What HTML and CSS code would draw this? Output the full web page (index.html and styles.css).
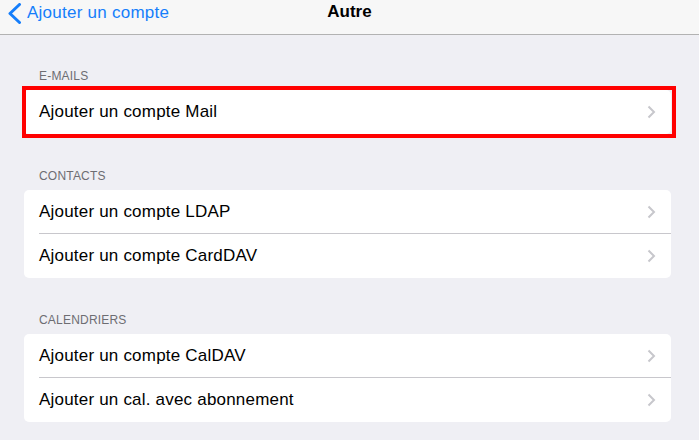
FILE: index.html
```html
<!DOCTYPE html>
<html lang="fr">
<head>
<meta charset="utf-8">
<title>Autre</title>
<link rel="stylesheet" href="styles.css">
</head>
<body>
<header class="navbar">
  <a class="back" href="#">
    <svg class="back-icon" width="14" height="21" viewBox="0 0 14 21"><path d="M11.5 1.5 L2 10.5 L11.5 19.5" fill="none" stroke="#157efb" stroke-width="3" stroke-linecap="round" stroke-linejoin="round"/></svg>
    <span>Ajouter un compte</span>
  </a>
  <h1 class="title">Autre</h1>
  <div class="spacer"></div>
</header>
<main class="content">
  <section class="group">
    <h2 class="group-title">E-mails</h2>
    <ul class="card card--marked">
      <li class="row"><span>Ajouter un compte Mail</span><svg class="chev" width="9" height="14" viewBox="0 0 9 14"><path d="M1.5 1.5 L7 7 L1.5 12.5" fill="none" stroke="#c7c7cc" stroke-width="2"/></svg></li>
    </ul>
  </section>
  <section class="group">
    <h2 class="group-title">Contacts</h2>
    <ul class="card">
      <li class="row"><span>Ajouter un compte LDAP</span><svg class="chev" width="9" height="14" viewBox="0 0 9 14"><path d="M1.5 1.5 L7 7 L1.5 12.5" fill="none" stroke="#c7c7cc" stroke-width="2"/></svg></li>
      <li class="row"><span>Ajouter un compte CardDAV</span><svg class="chev" width="9" height="14" viewBox="0 0 9 14"><path d="M1.5 1.5 L7 7 L1.5 12.5" fill="none" stroke="#c7c7cc" stroke-width="2"/></svg></li>
    </ul>
  </section>
  <section class="group">
    <h2 class="group-title">Calendriers</h2>
    <ul class="card">
      <li class="row"><span>Ajouter un compte CalDAV</span><svg class="chev" width="9" height="14" viewBox="0 0 9 14"><path d="M1.5 1.5 L7 7 L1.5 12.5" fill="none" stroke="#c7c7cc" stroke-width="2"/></svg></li>
      <li class="row"><span>Ajouter un cal. avec abonnement</span><svg class="chev" width="9" height="14" viewBox="0 0 9 14"><path d="M1.5 1.5 L7 7 L1.5 12.5" fill="none" stroke="#c7c7cc" stroke-width="2"/></svg></li>
    </ul>
  </section>
</main>
</body>
</html>
```

FILE: styles.css
```css
* { box-sizing: border-box; }
html, body {
  margin: 0;
  padding: 0;
  background: #efeff4;
  font-family: "Liberation Sans", Arial, sans-serif;
  height: 100%;
  overflow: hidden;
}
.navbar {
  height: 35px;
  background: #f7f7f7;
  border-bottom: 1px solid #b2b2b2;
  display: grid;
  grid-template-columns: 1fr auto 1fr;
  align-items: start;
  padding-top: 2px;
}
.back {
  display: flex;
  align-items: center;
  gap: 5px;
  padding-left: 8px;
  color: #157efb;
  text-decoration: none;
  font-size: 17px;
  letter-spacing: 0.25px;
  line-height: 20px;
}
.back-icon { display: block; margin-top: 1px; }
.title {
  margin: 0;
  font-size: 17px;
  font-weight: bold;
  line-height: 20px;
  color: #000;
  letter-spacing: 0;
}
.content {
  padding: 33px 28px 0 24px;
}
.group { margin-bottom: 34px; }
.group-title {
  margin: 0 0 6px 15px;
  font-size: 12px;
  line-height: 16px;
  font-weight: normal;
  text-transform: uppercase;
  color: #6d6d72;
  letter-spacing: 0.2px;
}
.card {
  list-style: none;
  margin: 0;
  padding: 0;
  background: #fff;
  border-radius: 5px;
}
.card--marked { position: relative; }
.card--marked::after {
  content: "";
  position: absolute;
  top: -4px;
  left: -2px;
  right: -5px;
  bottom: -4px;
  border: 4px solid #ff0000;
  pointer-events: none;
}
.row {
  height: 44px;
  display: flex;
  align-items: center;
  justify-content: space-between;
  padding: 0 15px 0 15px;
  font-size: 17px;
  letter-spacing: 0.2px;
  color: #000;
  position: relative;
}
.row + .row::before {
  content: "";
  position: absolute;
  top: -1px;
  left: 15px;
  right: 0;
  height: 1px;
  background: #c8c7cc;
}
.chev { display: block; flex: none; }
```
